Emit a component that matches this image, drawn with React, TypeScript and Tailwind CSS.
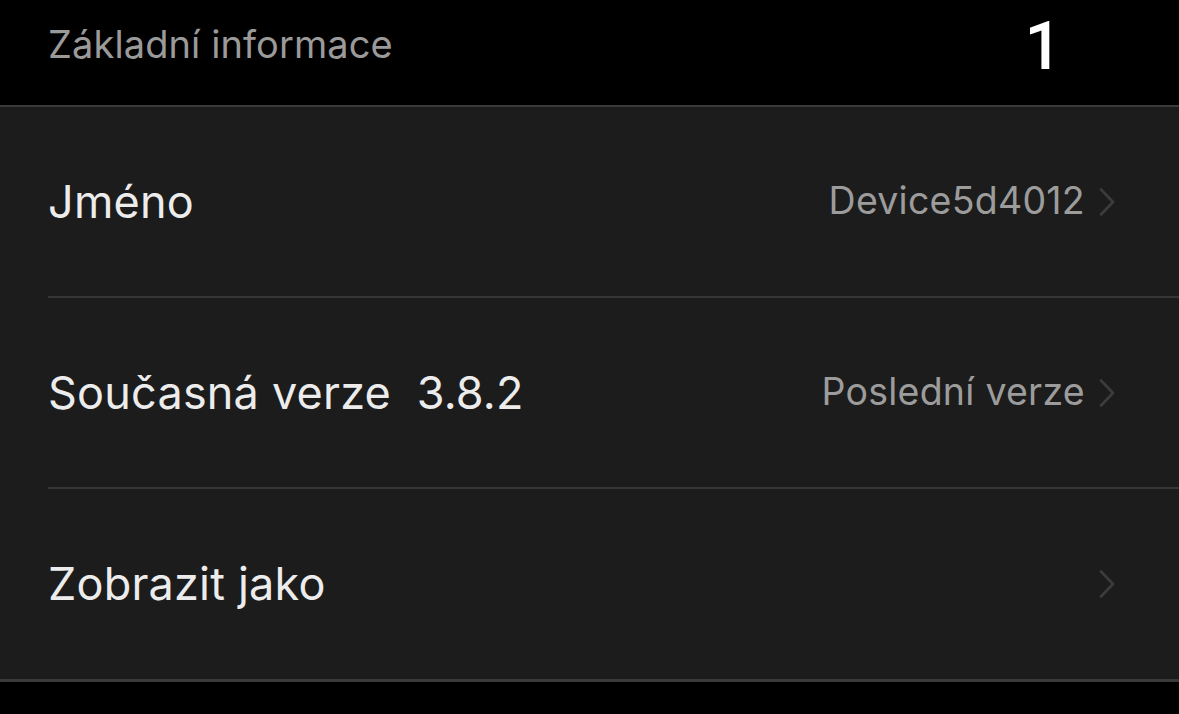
import React from "react";

const Chevron = () => (
  <svg width="16" height="28" viewBox="0 0 16 28" fill="none" className="ml-[14px] shrink-0">
    <path d="M2 1.5 L14 14 L2 26.5" stroke="#3c3c3c" strokeWidth="2.6" strokeLinecap="round" strokeLinejoin="round" />
  </svg>
);

const Row = ({ label, value, last }: { label: string; value?: string; last?: boolean }) => (
  <div className={`ml-[48px] flex items-center pr-[64px] ${last ? "h-[190px]" : "h-[191px] border-b-2 border-[#363636]"}`}>
    <span className="flex-1 text-[45px] text-[#ececec] tracking-[0.2px] whitespace-pre">{label}</span>
    {value && <span className="text-[37.5px] text-[#9c9c9c] tracking-[0.25px]">{value}</span>}
    <Chevron />
  </div>
);

export default function App() {
  return (
    <div className="w-[1179px] h-[714px] bg-black overflow-hidden" style={{ fontFamily: "Inter, 'Noto Sans', sans-serif" }}>
      <div className="h-[107px] flex items-center justify-between pl-[48px] pr-[117px] border-b-2 border-[#3a3a3a]">
        <span className="text-[38px] text-[#9a9a9a] tracking-[0.1px] -mt-[17px]">Základní informace</span>
        <span className="text-[66px] leading-none text-white font-medium -mt-[12px]" style={{ fontFamily: "Roboto, 'Liberation Sans', sans-serif" }}>1</span>
      </div>
      <div className="bg-[#1c1c1c] border-b-[3px] border-[#3a3a3a]">
        <Row label="Jméno" value="Device5d4012" />
        <Row label="Současná verze  3.8.2" value="Poslední verze" />
        <Row label="Zobrazit jako" last />
      </div>
    </div>
  );
}
